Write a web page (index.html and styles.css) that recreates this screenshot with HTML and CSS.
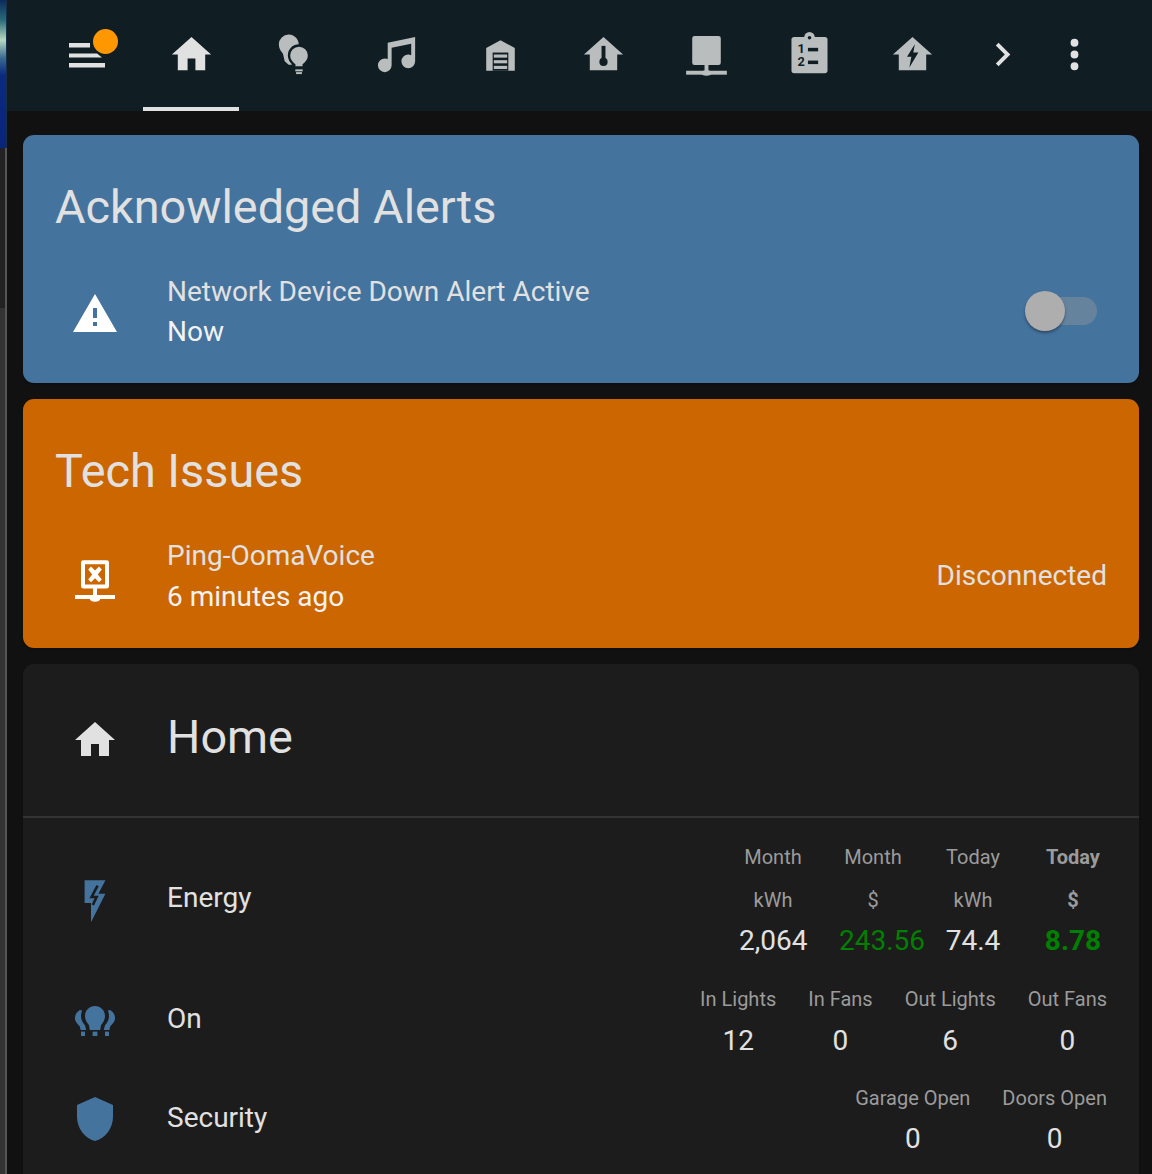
FILE: index.html
```html
<!DOCTYPE html>
<html>

<head>
  <title>Home</title>
  <link rel="stylesheet" href="styles.css">
</head>

<body>

  <div class="wallpaper">
    <div class="wallpaper-top"></div>
    <div class="wallpaper-mid"></div>
    <div class="wallpaper-low"></div>
  </div>

  <div class="app">

    <header class="toolbar">
      <div class="menu-button">
        <svg class="menu-icon" viewBox="0 0 46 46">
          <rect x="5" y="11" width="21" height="4.5"/>
          <path d="M5 21.5H33L38 25.5H5Z"/>
          <rect x="5" y="31" width="36" height="4.5"/>
        </svg>
        <span class="menu-badge"></span>
      </div>

      <div class="tab tab-active">
        <svg class="icon icon-light" viewBox="0 0 24 24"><path d="M10,20V14H14V20H19V12H22L12,3L2,12H5V20H10Z"/></svg>
      </div>
      <div class="tab">
        <svg class="icon" viewBox="0 0 24 24">
          <g class="bulb-pair">
            <path d="M8.4 1.8A5 5 0 0 0 3.4 6.8C3.4 9 4.5 10.4 5.5 11.6L6.4 15.5L8.4 17.2H10V8H13.4A5 5 0 0 0 8.4 1.8Z"/>
            <path class="icon-ring" d="M13.7 7.4A5.1 5.1 0 0 0 8.6 12.5C8.6 14.5 9.6 15.9 11.3 17.3V18.6H16.1V17.3C17.8 15.9 18.8 14.5 18.8 12.5A5.1 5.1 0 0 0 13.7 7.4Z"/>
            <rect x="11.8" y="19.6" width="3.8" height="1"/>
            <rect x="12.2" y="21" width="3" height="1"/>
          </g>
        </svg>
      </div>
      <div class="tab">
        <svg class="icon" viewBox="0 0 24 24"><path d="M21,3V15.5A3.5,3.5 0 0,1 17.5,19A3.5,3.5 0 0,1 14,15.5A3.5,3.5 0 0,1 17.5,12C18.04,12 18.55,12.12 19,12.34V6.47L9,8.6V17.5A3.5,3.5 0 0,1 5.5,21A3.5,3.5 0 0,1 2,17.5A3.5,3.5 0 0,1 5.5,14C6.04,14 6.55,14.12 7,14.34V6L21,3Z"/></svg>
      </div>
      <div class="tab">
        <svg class="icon" viewBox="0 0 24 24">
          <path d="M12 4.7L19.3 8.7V20.3H4.7V8.7Z"/>
          <rect class="icon-cut" x="8" y="11" width="8" height="9.3"/>
          <rect x="8.6" y="12" width="6.8" height="1.6"/>
          <rect x="8.6" y="14.9" width="6.8" height="1.6"/>
          <rect x="8.6" y="17.8" width="6.8" height="1.6"/>
        </svg>
      </div>
      <div class="tab">
        <svg class="icon" viewBox="0 0 24 24">
          <path d="M2,12H5V20H19V12H22L12,3Z"/>
          <rect class="icon-cut" x="11" y="7.6" width="2" height="8"/>
          <circle class="icon-cut" cx="12" cy="15.8" r="2.1"/>
        </svg>
      </div>
      <div class="tab">
        <svg class="icon" viewBox="0 0 24 24">
          <rect x="4.7" y="2.6" width="14.6" height="14.8" rx="1.2"/>
          <rect x="11" y="17" width="2" height="4"/>
          <rect x="1.6" y="20.3" width="20.8" height="2"/>
          <ellipse cx="12" cy="21.4" rx="2.6" ry="1.4"/>
        </svg>
      </div>
      <div class="tab">
        <svg class="icon" viewBox="0 0 24 24">
          <rect x="2.8" y="3" width="18.4" height="18.6" rx="1.4"/>
          <circle cx="12" cy="3.2" r="2.7"/>
          <circle class="icon-cut" cx="12" cy="3.4" r="0.9"/>
          <text class="icon-num" x="7.8" y="11.2">1</text>
          <text class="icon-num" x="7.8" y="18">2</text>
          <rect class="icon-cut" x="11.2" y="8.6" width="5.2" height="1.8"/>
          <rect class="icon-cut" x="11.2" y="15.1" width="5.2" height="1.8"/>
        </svg>
      </div>
      <div class="tab">
        <svg class="icon" viewBox="0 0 24 24">
          <path d="M2,12H5V20H19V12H22L12,3Z"/>
          <path class="icon-cut" d="M13.2 6.8L9.2 13.2H11.4L10.4 18.6L15 11H12.4Z"/>
        </svg>
      </div>

      <svg class="icon icon-light toolbar-more" viewBox="0 0 24 24"><path d="M8.59,16.58L13.17,12L8.59,7.41L10,6L16,12L10,18L8.59,16.58Z"/></svg>
      <svg class="icon icon-light toolbar-dots" viewBox="0 0 24 24"><path d="M12,16A2,2 0 0,1 14,18A2,2 0 0,1 12,20A2,2 0 0,1 10,18A2,2 0 0,1 12,16M12,10A2,2 0 0,1 14,12A2,2 0 0,1 12,14A2,2 0 0,1 10,12A2,2 0 0,1 12,10M12,4A2,2 0 0,1 14,6A2,2 0 0,1 12,8A2,2 0 0,1 10,6A2,2 0 0,1 12,4Z"/></svg>
    </header>

    <main class="content">

      <section class="card card-blue">
        <h1 class="card-title">Acknowledged Alerts</h1>
        <div class="alert-row">
          <svg class="row-icon icon-white" viewBox="0 0 24 24"><path d="M13 14H11V9H13M13 18H11V16H13M1 21H23L12 2L1 21Z"/></svg>
          <div class="row-text">
            <div>Network Device Down Alert Active</div>
            <div class="row-sub">Now</div>
          </div>
          <div class="toggle"><span class="toggle-thumb"></span></div>
        </div>
      </section>

      <section class="card card-orange">
        <h1 class="card-title">Tech Issues</h1>
        <div class="alert-row">
          <svg class="row-icon icon-white" viewBox="0 0 24 24">
            <path d="M6.2 2.6H17.8A1.2 1.2 0 0 1 19 3.8V15.6A1.2 1.2 0 0 1 17.8 16.8H13V20H22V22H14.6A2.6 1.4 0 0 1 9.4 22H2V20H11V16.8H6.2A1.2 1.2 0 0 1 5 15.6V3.8A1.2 1.2 0 0 1 6.2 2.6ZM7 4.6V14.8H17V4.6Z" fill-rule="evenodd"/>
            <path d="M8.6 7.2L10 5.8L12 7.8L14 5.8L15.4 7.2L13.4 9.7L15.4 12.2L14 13.6L12 11.6L10 13.6L8.6 12.2L10.6 9.7Z"/>
          </svg>
          <div class="row-text">
            <div>Ping-OomaVoice</div>
            <div class="row-sub">6 minutes ago</div>
          </div>
          <div class="row-state">Disconnected</div>
        </div>
      </section>

      <section class="card card-dark">
        <div class="home-head">
          <svg class="row-icon icon-pale" viewBox="0 0 24 24"><path d="M10,20V14H14V20H19V12H22L12,3L2,12H5V20H10Z"/></svg>
          <h1 class="home-title">Home</h1>
        </div>

        <div class="home-rows">
          <div class="home-row row-energy">
            <svg class="row-icon icon-blue" viewBox="0 0 24 24">
              <path d="M6.8 0.6H17.2L13.7 7.4H17.2L10 21.6V12H6.8Z"/>
              <path class="energy-line" d="M13.3 3.3L10.3 9H12.8L10.9 13"/>
            </svg>
            <div class="home-name">Energy</div>
            <div class="energy-grid">
              <div class="stat-label">Month</div>
              <div class="stat-label">Month</div>
              <div class="stat-label">Today</div>
              <div class="stat-label stat-bold">Today</div>
              <div class="stat-label">kWh</div>
              <div class="stat-label">$</div>
              <div class="stat-label">kWh</div>
              <div class="stat-label stat-bold">$</div>
              <div class="stat-value">2,064</div>
              <div class="stat-value stat-green">243.56</div>
              <div class="stat-value">74.4</div>
              <div class="stat-value stat-green stat-bold">8.78</div>
            </div>
          </div>

          <div class="home-row row-on">
            <svg class="row-icon icon-blue" viewBox="0 0 24 24">
              <path d="M12 6C9.2 6 7 8.2 7 11C7 13 8 14.4 9 15.6L9.4 18H14.6L15 15.6C16 14.4 17 13 17 11C17 8.2 14.8 6 12 6Z"/>
              <path d="M4.4 8C2.8 9 2 10.4 2 12C2 14 3.4 15 4.4 16.2L4.8 18H7.6L7 15.6C6 14.4 5 13 5 11.2C5 10 5.2 9 5.6 8.2Z"/>
              <path d="M19.6 8C21.2 9 22 10.4 22 12C22 14 20.6 15 19.6 16.2L19.2 18H16.4L17 15.6C18 14.4 19 13 19 11.2C19 10 18.8 9 18.4 8.2Z"/>
              <rect x="5" y="18.8" width="2" height="2.2"/>
              <rect x="10.8" y="18.8" width="2.4" height="2.2"/>
              <rect x="17" y="18.8" width="2" height="2.2"/>
            </svg>
            <div class="home-name">On</div>
            <div class="stat-group">
              <div class="stat"><div class="stat-label">In Lights</div><div class="stat-value">12</div></div>
              <div class="stat"><div class="stat-label">In Fans</div><div class="stat-value">0</div></div>
              <div class="stat"><div class="stat-label">Out Lights</div><div class="stat-value">6</div></div>
              <div class="stat"><div class="stat-label">Out Fans</div><div class="stat-value">0</div></div>
            </div>
          </div>

          <div class="home-row row-security">
            <svg class="row-icon icon-blue" viewBox="0 0 24 24"><path d="M12,1L3,5V11C3,16.55 6.84,21.74 12,23C17.16,21.74 21,16.55 21,11V5L12,1Z"/></svg>
            <div class="home-name">Security</div>
            <div class="stat-group">
              <div class="stat"><div class="stat-label">Garage Open</div><div class="stat-value">0</div></div>
              <div class="stat"><div class="stat-label">Doors Open</div><div class="stat-value">0</div></div>
            </div>
          </div>
        </div>
      </section>

    </main>
  </div>

</body>

</html>
```

FILE: styles.css
```css
html, body {
  margin: 0;
  padding: 0;
  height: 1174px;
  overflow: hidden;
}

body {
  display: flex;
  background-color: #111111;
  color: #e1e1e1;
  font-family: Roboto, "Liberation Sans", sans-serif;
}

/* desktop showing at the left of the window */
.wallpaper {
  width: 7px;
  flex-shrink: 0;
  display: flex;
  flex-direction: column;
}

.wallpaper-top {
  height: 148px;
  border-right: 1px solid #1a2f4a;
  background: linear-gradient(to bottom, #0a2a5c 0, #2a6a78 20px, #b8d8c0 40px, #3a6a90 58px, #0a2a80 75px, #08257a 100%);
}

.wallpaper-mid {
  height: 160px;
  background: linear-gradient(to right, #222222 5px, #555555 5px);
}

.wallpaper-low {
  flex: 1;
  background: linear-gradient(to right, #333333 5px, #555555 5px);
}

.app {
  flex: 1;
  min-width: 0;
}

.toolbar {
  height: 111px;
  box-sizing: border-box;
  padding-left: 57px;
  display: flex;
  align-items: flex-start;
  background-color: #101e24;
}

.icon {
  width: 47px;
  height: 47px;
  display: block;
  fill: #b9bdbe;
  flex-shrink: 0;
}

.icon-light {
  fill: #e1e1e1;
}

.icon-cut {
  fill: #101e24;
}

.icon-ring {
  stroke: #101e24;
  stroke-width: 1.2;
}

.bulb-pair {
  transform: translateX(0.6px);
}

.icon-num {
  fill: #101e24;
  font-family: Roboto, sans-serif;
  font-size: 6.5px;
  font-weight: 700;
  text-anchor: middle;
}

.menu-button {
  position: relative;
  width: 46px;
  height: 46px;
  margin-top: 32px;
  margin-right: 33px;
}

.menu-icon {
  width: 46px;
  height: 46px;
  display: block;
  fill: #e1e1e1;
}

.menu-badge {
  position: absolute;
  top: -3px;
  left: 29px;
  width: 25px;
  height: 25px;
  border-radius: 50%;
  background-color: #ff9800;
}

.tab {
  width: 96px;
  height: 111px;
  box-sizing: border-box;
  margin-right: 7px;
  padding-top: 32px;
  display: flex;
  justify-content: center;
  align-items: flex-start;
}

.tab .icon {
  margin: -1px 0 0 1px;
}

.tab-active {
  border-bottom: 4px solid #e1e1e1;
}

.toolbar-more {
  margin-top: 31px;
  margin-left: 12px;
}

.toolbar-dots {
  margin-top: 31px;
  margin-left: 25px;
}

.content {
  padding: 24px 13px 0 16px;
  display: flex;
  flex-direction: column;
  gap: 16px;
}

.card {
  border-radius: 11px;
  box-shadow: 0 2px 2px rgba(0, 0, 0, 0.14);
}

.card-blue {
  background-color: #44739e;
}

.card-orange {
  background-color: #cc6600;
}

.card-dark {
  background-color: #1c1c1c;
}

.card-title {
  margin: 0;
  height: 136px;
  box-sizing: border-box;
  padding: 44px 32px 0;
  font-size: 46.8px;
  font-weight: 400;
  line-height: 56px;
}

.alert-row {
  height: 80px;
  padding: 0 32px 32px;
  display: flex;
  align-items: center;
}

.card-orange .alert-row {
  height: 81px;
}

.row-icon {
  width: 48px;
  height: 48px;
  margin: 0 16px;
  display: block;
  flex-shrink: 0;
}

.alert-row .row-icon {
  margin-top: 6px;
}

.row-energy .row-icon {
  margin-top: 7px;
}

.row-energy .home-name {
  margin-bottom: 4px;
}

.row-on .row-icon,
.row-on .home-name {
  margin-bottom: 4px;
}

.row-security .row-icon {
  margin-top: 2px;
}

.row-security .home-name {
  margin-bottom: 2px;
}

.icon-white {
  fill: #ffffff;
}

.icon-pale {
  fill: #e1e1e1;
}

.icon-blue {
  fill: #44739e;
}

.row-text {
  margin-left: 32px;
  padding-top: 2px;
  flex: 1;
  font-size: 28px;
  line-height: 40.5px;
}

.row-sub {
  color: #f2f2f2;
}

.row-state {
  font-size: 28px;
}

.toggle {
  position: relative;
  width: 52px;
  height: 28px;
  margin-right: 10px;
  border-radius: 14px;
  background-color: rgba(158, 158, 158, 0.38);
}

.toggle-thumb {
  position: absolute;
  top: -6px;
  left: -20px;
  width: 40px;
  height: 40px;
  border-radius: 50%;
  background-color: #aeaeae;
  box-shadow: 0 2px 3px rgba(0, 0, 0, 0.35);
}

.home-head {
  height: 154px;
  box-sizing: border-box;
  padding-left: 32px;
  display: flex;
  align-items: center;
  border-bottom: 2px solid #333333;
}

.home-title {
  margin: 0 0 6px 32px;
  font-size: 46.8px;
  font-weight: 400;
  line-height: 56px;
}

.home-rows {
  padding: 19px 32px 40px;
  display: flex;
  flex-direction: column;
  gap: 16px;
}

.row-energy {
  margin-bottom: 1px;
}

.home-row {
  display: flex;
  align-items: center;
}

.home-name {
  margin-left: 32px;
  flex: 1;
  font-size: 28px;
}

.energy-grid {
  display: grid;
  grid-template-columns: repeat(4, 68px);
  grid-template-rows: 43px 41px 41px;
  column-gap: 32px;
}

.energy-grid .stat-value {
  margin-top: -1px;
}

.stat-group {
  display: flex;
  gap: 32px;
}

.stat-label {
  color: #9b9b9b;
  font-size: 20px;
  line-height: 41px;
  text-align: center;
  white-space: nowrap;
}

.row-security .stat-label {
  margin-top: 1px;
}

.row-security .stat-value {
  margin-top: -1px;
}

.stat-value {
  font-size: 28px;
  line-height: 41px;
  text-align: center;
  white-space: nowrap;
}

.stat-bold {
  font-weight: 700;
}

.stat-green {
  color: #008000;
}

.energy-line {
  fill: none;
  stroke: #1c1c1c;
  stroke-width: 1.3;
}
```
